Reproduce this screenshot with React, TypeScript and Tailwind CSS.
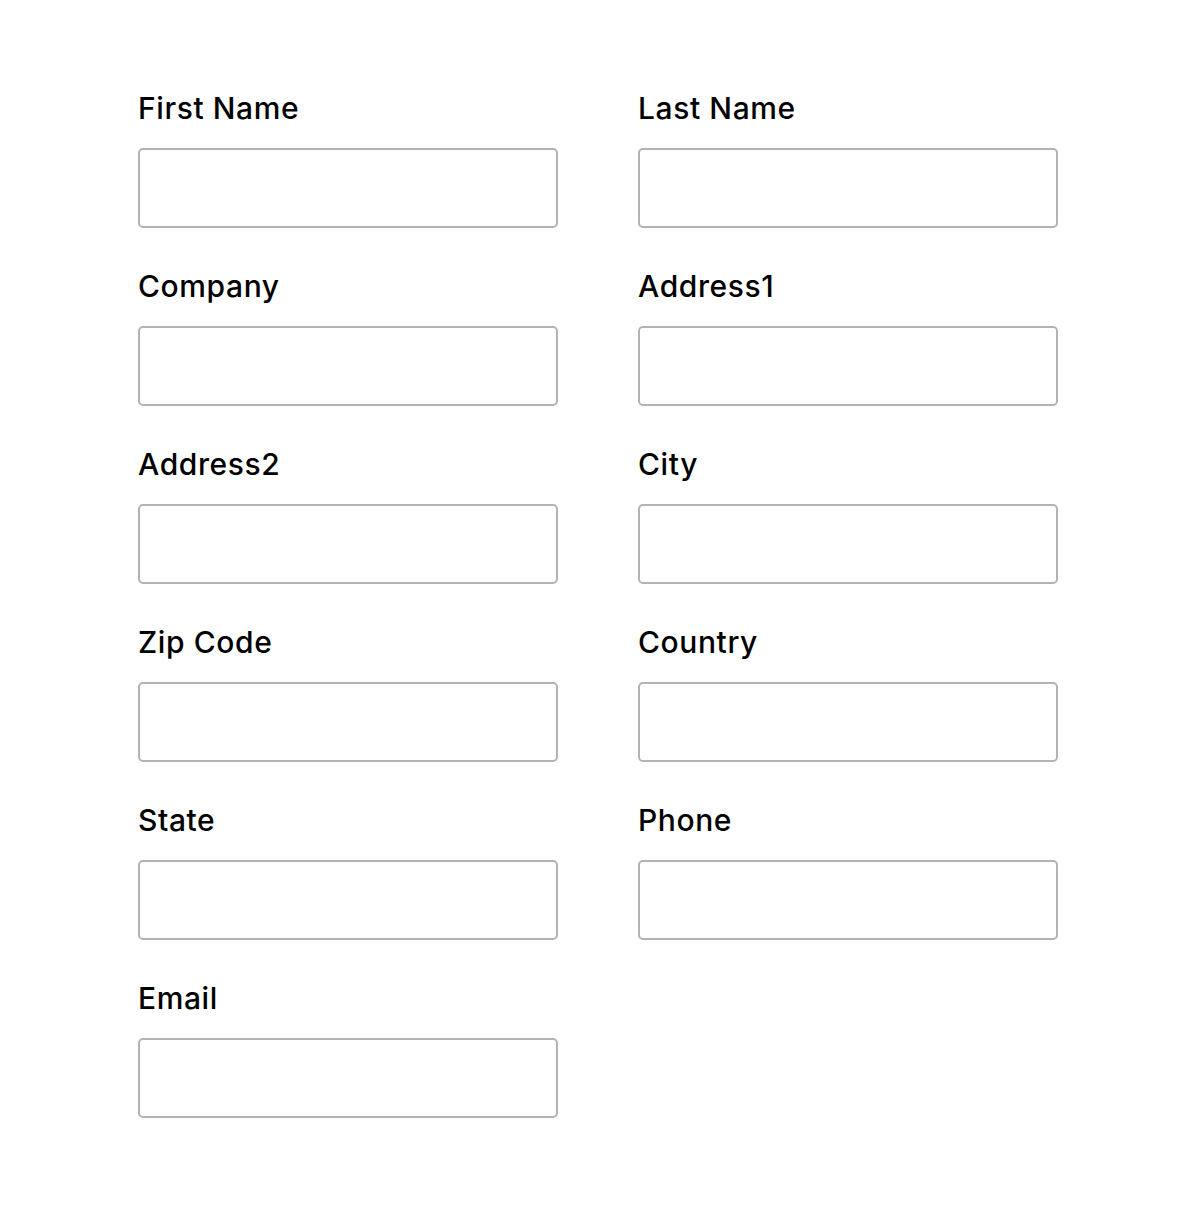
import React from 'react';

const fields = [
  'First Name',
  'Last Name',
  'Company',
  'Address1',
  'Address2',
  'City',
  'Zip Code',
  'Country',
  'State',
  'Phone',
  'Email',
];

function Field({ label }: { label: string }) {
  return (
    <div className="flex flex-col">
      <label className="text-[30px] leading-[36px] font-medium tracking-[0.6px] text-black mb-[22px]">{label}</label>
      <input
        type="text"
        className="w-[420px] h-[80px] border-2 border-[#b3b3b3] rounded-[5px] bg-white outline-none"
      />
    </div>
  );
}

export default function App() {
  return (
    <div
      className="min-h-[1208px] w-[1184px] bg-white pt-[90px] pl-[138px]"
      style={{ fontFamily: 'Inter, "Noto Sans", sans-serif' }}
    >
      <div className="grid grid-cols-[420px_420px] gap-x-[80px] gap-y-[40px]">
        {fields.map((f) => (
          <Field key={f} label={f} />
        ))}
      </div>
    </div>
  );
}
